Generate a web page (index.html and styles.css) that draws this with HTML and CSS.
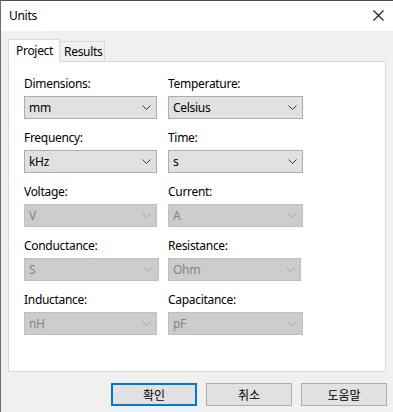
FILE: index.html
```html
<!DOCTYPE html>
<html lang="en">
<head>
    <meta charset="UTF-8">
    <meta name="viewport" content="width=device-width, initial-scale=1.0">
    <title>Units</title>
    <link rel="stylesheet" href="styles.css">
</head>
<body>
    <div class="window">
        <div class="titlebar">
            <span class="title">Units</span>
            <svg class="close" width="11" height="11" viewBox="0 0 11 11">
                <path d="M0.5 0.5 L10.5 10.5 M10.5 0.5 L0.5 10.5" stroke="#1a1a1a" stroke-width="1.1" fill="none"/>
            </svg>
        </div>
        <div class="content">
            <div class="tabs">
                <div class="tab active">Project</div>
                <div class="tab">Results</div>
            </div>
            <div class="panel">
                <div class="grid">
                    <div class="field">
                        <label>Dimensions:</label>
                        <div class="combo narrow"><span>mm</span><svg class="chev" width="9" height="5" viewBox="0 0 9 5"><path d="M0.5 0.5 L4.5 4.5 L8.5 0.5" fill="none"/></svg></div>
                    </div>
                    <div class="field">
                        <label>Temperature:</label>
                        <div class="combo"><span>Celsius</span><svg class="chev" width="9" height="5" viewBox="0 0 9 5"><path d="M0.5 0.5 L4.5 4.5 L8.5 0.5" fill="none"/></svg></div>
                    </div>
                    <div class="field">
                        <label>Frequency:</label>
                        <div class="combo narrow"><span>kHz</span><svg class="chev" width="9" height="5" viewBox="0 0 9 5"><path d="M0.5 0.5 L4.5 4.5 L8.5 0.5" fill="none"/></svg></div>
                    </div>
                    <div class="field">
                        <label>Time:</label>
                        <div class="combo"><span>s</span><svg class="chev" width="9" height="5" viewBox="0 0 9 5"><path d="M0.5 0.5 L4.5 4.5 L8.5 0.5" fill="none"/></svg></div>
                    </div>
                    <div class="field">
                        <label>Voltage:</label>
                        <div class="combo narrow disabled"><span>V</span><svg class="chev" width="9" height="5" viewBox="0 0 9 5"><path d="M0.5 0.5 L4.5 4.5 L8.5 0.5" fill="none"/></svg></div>
                    </div>
                    <div class="field">
                        <label>Current:</label>
                        <div class="combo disabled"><span>A</span><svg class="chev" width="9" height="5" viewBox="0 0 9 5"><path d="M0.5 0.5 L4.5 4.5 L8.5 0.5" fill="none"/></svg></div>
                    </div>
                    <div class="field">
                        <label>Conductance:</label>
                        <div class="combo disabled"><span>S</span><svg class="chev" width="9" height="5" viewBox="0 0 9 5"><path d="M0.5 0.5 L4.5 4.5 L8.5 0.5" fill="none"/></svg></div>
                    </div>
                    <div class="field">
                        <label>Resistance:</label>
                        <div class="combo narrow disabled"><span>Ohm</span><svg class="chev" width="9" height="5" viewBox="0 0 9 5"><path d="M0.5 0.5 L4.5 4.5 L8.5 0.5" fill="none"/></svg></div>
                    </div>
                    <div class="field">
                        <label>Inductance:</label>
                        <div class="combo narrow disabled"><span>nH</span><svg class="chev" width="9" height="5" viewBox="0 0 9 5"><path d="M0.5 0.5 L4.5 4.5 L8.5 0.5" fill="none"/></svg></div>
                    </div>
                    <div class="field">
                        <label>Capacitance:</label>
                        <div class="combo disabled"><span>pF</span><svg class="chev" width="9" height="5" viewBox="0 0 9 5"><path d="M0.5 0.5 L4.5 4.5 L8.5 0.5" fill="none"/></svg></div>
                    </div>
                </div>
            </div>
            <div class="buttons">
                <button class="default">확인</button>
                <button>취소</button>
                <button>도움말</button>
            </div>
        </div>
    </div>
</body>
</html>
```

FILE: styles.css
```css
body {
    margin: 0;
    padding: 0;
    font-family: "Segoe UI", "Noto Sans", "Noto Sans CJK KR", sans-serif;
    font-size: 12px;
    letter-spacing: -0.3px;
    color: #000;
    background-color: #f0f0f0;
}
.window {
    width: 393px;
    height: 412px;
    box-sizing: border-box;
    border-top: 1px solid #4f4f4f;
    border-left: 1px solid #6e6e6e;
    background-color: #f0f0f0;
    overflow: hidden;
}
.titlebar {
    height: 30px;
    background-color: #fff;
    display: flex;
    align-items: center;
    justify-content: space-between;
    padding: 0 9px 0 8px;
}
.title {
    line-height: 16px;
    margin-top: -1px;
}
.close {
    display: block;
    margin-top: -2px;
}
.content {
    padding: 8px 8px 0 7px;
}
.tabs {
    display: flex;
    align-items: flex-end;
    height: 22px;
}
.tab {
    box-sizing: border-box;
    width: 45px;
    height: 20px;
    padding: 0 0 0 4px;
    line-height: 19px;
    white-space: nowrap;
    border: 1px solid #d9d9d9;
    border-bottom: none;
    border-left: none;
    background-color: #f0f0f0;
}
.tab.active {
    width: 52px;
    height: 23px;
    margin-bottom: -1px;
    padding: 0 0 0 7px;
    line-height: 21px;
    border-left: 1px solid #d9d9d9;
    background-color: #fff;
    position: relative;
    z-index: 1;
}
.panel {
    box-sizing: border-box;
    height: 311px;
    width: 378px;
    background-color: #fff;
    border: 1px solid #d9d9d9;
    padding: 14px 0 0 15px;
}
.grid {
    display: grid;
    grid-template-columns: 135px 135px;
    column-gap: 9px;
    row-gap: 11px;
}
.field label {
    display: block;
    height: 16px;
    line-height: 16px;
    margin-bottom: 4px;
}
.combo {
    box-sizing: border-box;
    width: 135px;
    height: 23px;
    display: flex;
    align-items: center;
    justify-content: space-between;
    padding: 0 5px 0 4px;
    background-color: #e1e1e1;
    border: 1px solid #adadad;
}
.combo.narrow {
    width: 133px;
}
.combo span {
    line-height: 16px;
}
.chev {
    display: block;
}
.chev path {
    stroke: #3a3a3a;
    stroke-width: 1;
}
.combo.disabled {
    background-color: #cccccc;
    border-color: #bfbfbf;
    color: #838383;
}
.combo.disabled .chev path {
    stroke: #a6a6a6;
}
.buttons {
    display: flex;
    justify-content: flex-end;
    gap: 9px;
    margin-top: 11px;
    margin-right: -2px;
}
.buttons button {
    box-sizing: border-box;
    width: 86px;
    height: 23px;
    padding: 0;
    font-family: "Malgun Gothic", "Noto Sans CJK KR", sans-serif;
    font-size: 12px;
    letter-spacing: 0;
    color: #000;
    background-color: #e1e1e1;
    border: 1px solid #adadad;
}
.buttons button.default {
    border: 2px solid #0078d7;
}
```
